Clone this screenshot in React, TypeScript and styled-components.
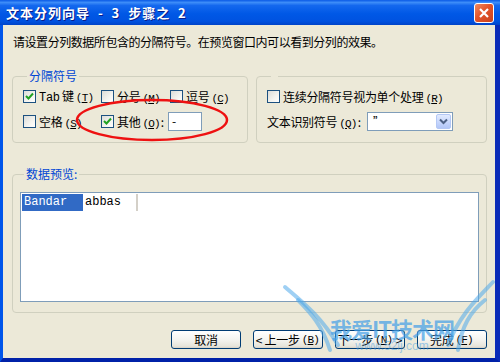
import React from "react";
import styled, { createGlobalStyle } from "styled-components";

const GlobalStyle = createGlobalStyle`
  html, body {
    margin: 0;
    padding: 0;
    background: #ece9d8;
  }
  * {
    box-sizing: border-box;
  }
`;

const FONT = `"Noto Sans CJK SC", "Liberation Sans", sans-serif`;

const Window = styled.div`
  position: relative;
  width: 500px;
  height: 362px;
  display: flex;
  flex-direction: column;
  background: #ece9d8;
  font-family: ${FONT};
  font-size: 12px;
  color: #000;
  overflow: hidden;
`;

const TitleBar = styled.div`
  height: 25px;
  flex: none;
  display: flex;
  align-items: center;
  justify-content: space-between;
  padding: 0 6px 0 6px;
  background: linear-gradient(
    to bottom,
    #0a5ae6 0%,
    #3c8cf8 10%,
    #1468ee 22%,
    #0058e6 55%,
    #0052e0 85%,
    #0044c8 100%
  );
  color: #fff;
  font-weight: bold;
  font-size: 13px;
  letter-spacing: 1px;
  white-space: pre;
  text-shadow: 1px 1px 0 #0a1e8c;
`;

const CloseButton = styled.div`
  width: 20px;
  height: 20px;
  border: 1px solid #fff;
  border-radius: 3px;
  background: linear-gradient(135deg, #f08a62 0%, #e2542a 45%, #c9411c 100%);
  display: flex;
  align-items: center;
  justify-content: center;
`;

const Body = styled.div`
  flex: 1;
  display: flex;
  flex-direction: column;
  padding: 0 8px 0 9px;
  border-left: 3px solid #0055ea;
  border-right: 5px solid #0a2bb8;
  border-bottom: 4px solid #0021a8;
`;

const Instruction = styled.div`
  margin: 10px 0 0 1px;
  line-height: 14px;
  letter-spacing: -0.45px;
`;

const GroupsRow = styled.div`
  display: flex;
  gap: 8px;
  margin-top: 20px;
`;

const Group = styled.fieldset<{ $width?: number }>`
  margin: 0;
  min-width: 0;
  ${({ $width }) => ($width ? `width: ${$width}px; flex: none;` : "flex: 1;")}
  border: 1px solid #d0d0bf;
  border-radius: 4px;
  padding: 4px 10px 12px 10px;
`;

const Legend = styled.legend`
  color: #0046d5;
  line-height: 14px;
  padding: 0 2px;
  margin-left: 4px;
`;

const OptionRow = styled.div<{ $gap?: number }>`
  display: flex;
  align-items: center;
  height: 18px;
  margin-top: ${({ $gap }) => $gap ?? 0}px;
`;

const CheckItem = styled.label<{ $width?: number }>`
  display: flex;
  align-items: center;
  gap: 3px;
  ${({ $width }) => ($width ? `width: ${$width}px;` : "")}
  white-space: nowrap;
  letter-spacing: -0.3px;
`;

const Box = styled.span`
  width: 13px;
  height: 13px;
  flex: none;
  border: 1px solid #1c5180;
  background: linear-gradient(135deg, #dcdcd7 0%, #f4f4f0 60%, #ffffff 100%);
  display: flex;
  align-items: center;
  justify-content: center;
`;

const Mono = styled.span`
  font-family: "Liberation Mono", monospace;
  font-size: 12px;
`;

const KeyHint = styled.span`
  font-family: "Liberation Mono", monospace;
  font-size: 11px;
  letter-spacing: -0.8px;
  margin-left: 2px;
  margin-right: 1px;
`;

const TextInput = styled.div`
  width: 34px;
  height: 19px;
  margin-left: 4px;
  border: 1px solid #7f9db9;
  background: #fff;
  padding-left: 3px;
  line-height: 16px;
`;

const FieldLabel = styled.span`
  width: 100px;
  white-space: nowrap;
  letter-spacing: -0.3px;
`;

const Select = styled.div`
  width: 86px;
  height: 19px;
  border: 1px solid #7f9db9;
  background: #fff;
  display: flex;
  align-items: stretch;
  justify-content: space-between;
  padding: 1px;
`;

const SelectText = styled.span`
  padding-left: 4px;
  line-height: 15px;
  font-size: 11px;
`;

const DropButton = styled.span`
  width: 15px;
  border: 1px solid #b4c8f5;
  border-radius: 2px;
  background: linear-gradient(to bottom, #e2ebfe 0%, #c5d5fc 60%, #b2c6f7 100%);
  display: flex;
  align-items: center;
  justify-content: center;
`;

const PreviewGroup = styled(Group)`
  flex: none;
  margin-top: 24px;
  padding: 11px 7px 10px 7px;
`;

const PreviewBox = styled.div`
  height: 110px;
  border: 1px solid #7f9db9;
  background: #fff;
  display: flex;
  align-items: flex-start;
  padding: 1px;
`;

const Cell = styled.div<{ $width: number; $selected?: boolean }>`
  width: ${({ $width }) => $width}px;
  height: 17px;
  line-height: 17px;
  padding-left: 2px;
  font-family: "Liberation Mono", "DejaVu Sans Mono", monospace;
  font-size: 12px;
  background: ${({ $selected }) => ($selected ? "#316ac5" : "#fff")};
  color: ${({ $selected }) => ($selected ? "#fff" : "#000")};
  border-right: 2px solid ${({ $selected }) => ($selected ? "#316ac5" : "#d4d0c8")};
`;

const ButtonRow = styled.div`
  display: flex;
  justify-content: flex-end;
  gap: 12px;
  margin-top: 17px;
`;

const Button = styled.div`
  width: 70px;
  height: 19px;
  border: 1px solid #003c74;
  border-radius: 3px;
  background: linear-gradient(to bottom, #ffffff 0%, #f4f4f0 50%, #e6e4da 90%, #d6d0c5 100%);
  display: flex;
  align-items: center;
  justify-content: center;
  white-space: pre;
  letter-spacing: -0.3px;
`;

const Overlay = styled.svg`
  position: absolute;
  left: 0;
  top: 0;
  pointer-events: none;
`;

const Watermark = styled.div`
  position: absolute;
  left: 330px;
  top: 316px;
  display: flex;
  flex-direction: column;
  align-items: center;
  color: rgba(70, 160, 230, 0.72);
  pointer-events: none;
`;

const WatermarkTitle = styled.span`
  font-family: ${FONT};
  font-weight: bold;
  font-size: 22px;
  line-height: 24px;
  letter-spacing: -1px;
`;

const WatermarkUrl = styled.span`
  font-family: "Liberation Sans", sans-serif;
  font-size: 12px;
  line-height: 12px;
  color: rgba(70, 160, 230, 0.5);
`;

const Check = ({ checked }: { checked?: boolean }) => (
  <Box>
    {checked && (
      <svg width="9" height="9" viewBox="0 0 9 9">
        <path d="M1 4 L3.5 6.5 L8 1.5" stroke="#21a121" strokeWidth="2" fill="none" />
      </svg>
    )}
  </Box>
);

const Key = ({ k }: { k: string }) => (
  <KeyHint>
    (<u>{k}</u>)
  </KeyHint>
);

export default function App() {
  return (
    <>
      <GlobalStyle />
      <Window>
        <TitleBar>
          <span>{"文本分列向导  -  3  步骤之  2"}</span>
          <CloseButton>
            <svg width="12" height="12" viewBox="0 0 12 12">
              <path d="M2 2 L10 10 M10 2 L2 10" stroke="#fff" strokeWidth="2.2" />
            </svg>
          </CloseButton>
        </TitleBar>
        <Body>
          <Instruction>请设置分列数据所包含的分隔符号。在预览窗口内可以看到分列的效果。</Instruction>
          <GroupsRow>
            <Group $width={236}>
              <Legend>分隔符号</Legend>
              <OptionRow>
                <CheckItem $width={78}>
                  <Check checked />
                  <span>
                    <Mono>Tab</Mono> 键<Key k="T" />
                  </span>
                </CheckItem>
                <CheckItem $width={69}>
                  <Check />
                  <span>
                    分号<Key k="M" />
                  </span>
                </CheckItem>
                <CheckItem>
                  <Check />
                  <span>
                    逗号<Key k="C" />
                  </span>
                </CheckItem>
              </OptionRow>
              <OptionRow $gap={7}>
                <CheckItem $width={78}>
                  <Check />
                  <span>
                    空格<Key k="S" />
                  </span>
                </CheckItem>
                <CheckItem>
                  <Check checked />
                  <span>
                    其他<Key k="O" />:
                  </span>
                </CheckItem>
                <TextInput>-</TextInput>
              </OptionRow>
            </Group>
            <Group>
              <Legend>&nbsp;</Legend>
              <OptionRow>
                <CheckItem>
                  <Check />
                  <span>
                    连续分隔符号视为单个处理<Key k="R" />
                  </span>
                </CheckItem>
              </OptionRow>
              <OptionRow $gap={7}>
                <FieldLabel>
                  文本识别符号<Key k="Q" />:
                </FieldLabel>
                <Select>
                  <SelectText>”</SelectText>
                  <DropButton>
                    <svg width="9" height="7" viewBox="0 0 9 7">
                      <path d="M1 1.5 L4.5 5 L8 1.5" stroke="#4d6185" strokeWidth="2" fill="none" />
                    </svg>
                  </DropButton>
                </Select>
              </OptionRow>
            </Group>
          </GroupsRow>
          <PreviewGroup>
            <Legend>数据预览:</Legend>
            <PreviewBox>
              <Cell $width={61} $selected>
                Bandar
              </Cell>
              <Cell $width={55}>abbas</Cell>
            </PreviewBox>
          </PreviewGroup>
          <ButtonRow>
            <Button>取消</Button>
            <Button>
              {"< 上一步"}
              <Key k="B" />
            </Button>
            <Button>
              下一步
              <Key k="N" />
              {" >"}
            </Button>
            <Button>
              完成
              <Key k="F" />
            </Button>
          </ButtonRow>
        </Body>
        <Overlay width="500" height="362" viewBox="0 0 500 362">
          <ellipse cx="152" cy="120" rx="75" ry="20" fill="none" stroke="#ee1111" strokeWidth="2.5" />
          <g fill="none" stroke="rgba(80,170,235,0.55)" strokeWidth="4" strokeLinecap="round">
            <path d="M285 287 C 300 300, 320 315, 338 345" />
            <path d="M298 300 C 310 312, 322 325, 330 350" />
            <path d="M493 282 C 478 298, 460 314, 448 345" />
            <path d="M485 300 C 470 312, 462 326, 458 350" />
          </g>
        </Overlay>
        <Watermark>
          <WatermarkTitle>我爱IT技术网</WatermarkTitle>
          <WatermarkUrl>www.52ij.com</WatermarkUrl>
        </Watermark>
      </Window>
    </>
  );
}
